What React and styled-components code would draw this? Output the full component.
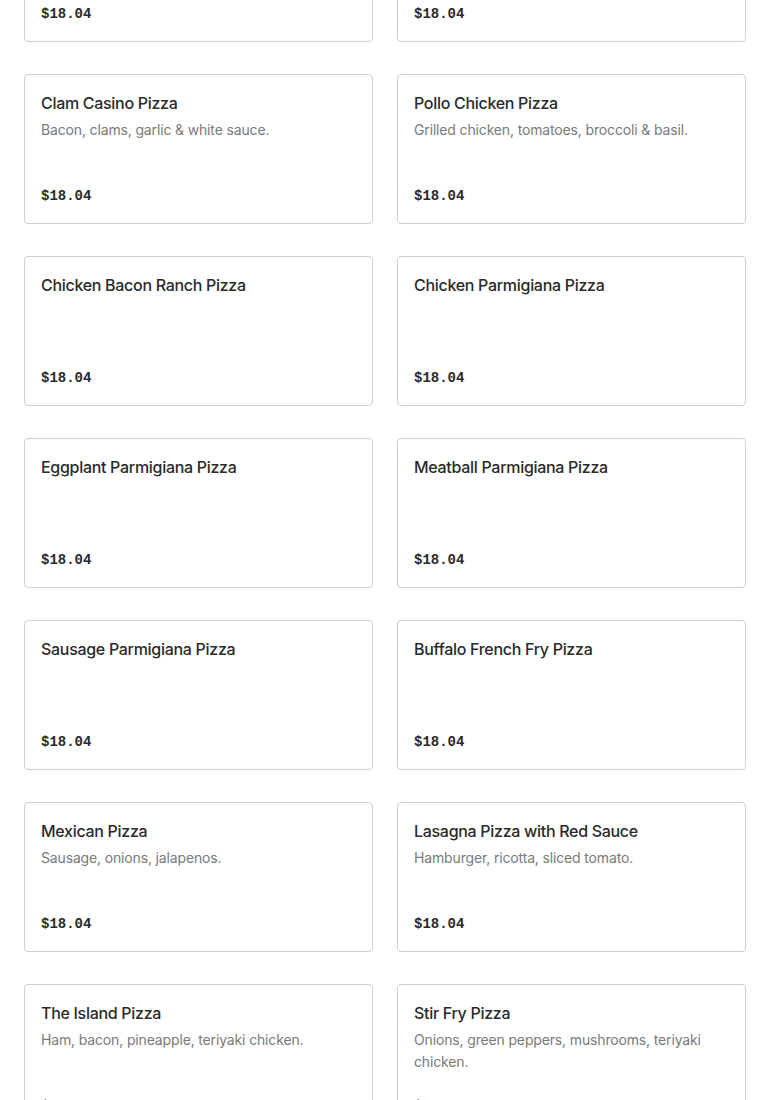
import styled, { createGlobalStyle } from 'styled-components'

const GlobalStyle = createGlobalStyle`
  * { box-sizing: border-box; }
  body {
    margin: 0;
    background: #fff;
    font-family: Inter, "Noto Sans", sans-serif;
  }
`

const Menu = styled.section`
  padding: 0 24px 24px;
  margin-top: -108px;
`

const Grid = styled.div`
  display: grid;
  grid-template-columns: 1fr 1fr;
  column-gap: 24px;
  row-gap: 32px;
`

const Card = styled.div`
  display: flex;
  flex-direction: column;
  min-height: 150px;
  padding: 16px;
  border: 1px solid #cfcfcf;
  border-radius: 4px;
  background: #fff;
`

const Name = styled.h3`
  margin: 0;
  font-size: 16px;
  line-height: 24px;
  font-weight: 500;
  color: #2a2a2a;
  letter-spacing: -0.3px;
`

const Desc = styled.p`
  margin: 4px 0 0;
  font-size: 14px;
  line-height: 22px;
  color: #7a7a7a;
  letter-spacing: -0.15px;
`

const Price = styled.div`
  margin-top: auto;
  padding-top: 16px;
  font-family: "Liberation Mono", "DejaVu Sans Mono", monospace;
  font-weight: 700;
  font-size: 14px;
  line-height: 22px;
  color: #2a2a2a;
`

const items = [
  { name: 'White Pizza', desc: '' },
  { name: 'Hawaiian Pizza', desc: '' },
  { name: 'Clam Casino Pizza', desc: 'Bacon, clams, garlic & white sauce.' },
  { name: 'Pollo Chicken Pizza', desc: 'Grilled chicken, tomatoes, broccoli & basil.' },
  { name: 'Chicken Bacon Ranch Pizza', desc: '' },
  { name: 'Chicken Parmigiana Pizza', desc: '' },
  { name: 'Eggplant Parmigiana Pizza', desc: '' },
  { name: 'Meatball Parmigiana Pizza', desc: '' },
  { name: 'Sausage Parmigiana Pizza', desc: '' },
  { name: 'Buffalo French Fry Pizza', desc: '' },
  { name: 'Mexican Pizza', desc: 'Sausage, onions, jalapenos.' },
  { name: 'Lasagna Pizza with Red Sauce', desc: 'Hamburger, ricotta, sliced tomato.' },
  { name: 'The Island Pizza', desc: 'Ham, bacon, pineapple, teriyaki chicken.' },
  { name: 'Stir Fry Pizza', desc: 'Onions, green peppers, mushrooms, teriyaki chicken.' },
]

export default function App() {
  return (
    <>
      <GlobalStyle />
      <Menu>
        <Grid>
          {items.map((item) => (
            <Card key={item.name}>
              <Name>{item.name}</Name>
              {item.desc && <Desc>{item.desc}</Desc>}
              <Price>$18.04</Price>
            </Card>
          ))}
        </Grid>
      </Menu>
    </>
  )
}
